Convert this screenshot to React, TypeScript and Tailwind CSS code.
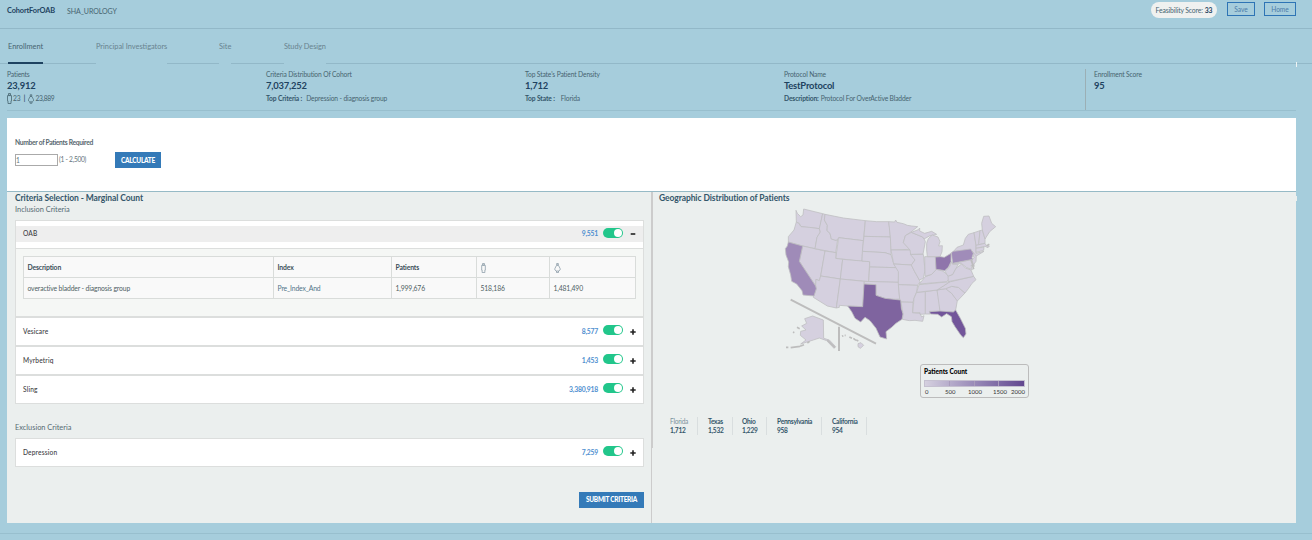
import React from "react";

const states: [string, string][] = [
  ["WA", "78,31 79,66 88,70 93,80 120,83 149,86 158,41 101,27 99,45 92,50 82,40"],
  ["OR", "79,66 72,90 55,110 55,126 98,138 135,146 141,112 151,96 148,86 118,82 93,80 86,70"],
  ["NV", "98,138 165,153 152,228 148,242 138,238 137,258 88,184"],
  ["ID", "158,41 165,43 163,60 172,76 171,92 180,100 184,117 198,121 203,118 197,158 135,146 141,112 151,96 148,86"],
  ["MT", "165,43 220,54 286,62 280,122 206,113 203,118 198,121 184,117 180,100 171,92 172,76 163,60"],
  ["WY", "206,113 280,122 276,184 197,175"],
  ["UT", "165,153 198,158 197,175 218,178 211,237 152,228"],
  ["CO", "218,178 299,185 296,245 211,237"],
  ["AZ", "152,228 211,237 199,324 172,318 130,292 139,266 137,258 138,238 148,242"],
  ["NM", "211,237 283,244 278,320 233,318 208,316 208,322 199,324"],
  ["ND", "286,62 320,65 356,65 360,92 361,111 282,109"],
  ["SD", "282,109 361,111 363,150 363,164 345,158 277,154"],
  ["NE", "277,154 345,158 363,164 371,190 380,203 299,201 299,185 276,183"],
  ["KS", "299,201 380,203 386,214 385,247 296,245"],
  ["OK", "283,244 385,247 389,297 372,298 345,295 318,286 318,254 282,252"],
  ["MN", "356,65 374,66 377,60 381,67 400,71 412,76 425,78 443,80 420,98 406,107 400,128 421,148 363,150 361,111"],
  ["IA", "363,150 421,150 428,165 435,180 424,195 371,192"],
  ["MO", "371,192 424,195 434,215 446,235 450,245 443,256 385,254 385,215"],
  ["AR", "385,254 443,256 440,275 432,295 429,307 393,306 389,297"],
  ["LA", "393,306 429,307 428,338 450,340 455,351 462,347 458,364 435,361 418,362 397,358 399,342"],
  ["MS", "440,277 466,275 466,342 450,343 450,338 428,338 432,295"],
  ["AL", "466,275 501,270 511,310 510,334 478,334 480,342 466,342"],
  ["GA", "501,270 527,266 545,280 562,302 557,330 550,336 510,334"],
  ["SC", "527,266 545,259 565,262 585,279 562,303 545,280"],
  ["NC", "538,246 611,229 618,239 606,250 596,265 585,279 565,262 545,259 527,266 501,270 520,258"],
  ["TN", "447,254 540,245 520,258 501,270 440,277"],
  ["KY", "448,252 466,230 485,223 499,208 518,213 532,224 544,230 530,245"],
  ["IL", "421,163 460,163 465,210 460,235 448,240 434,215 424,195 435,180"],
  ["IN", "464,170 496,170 499,208 485,223 465,229"],
  ["WI", "406,107 424,97 460,112 466,125 459,162 422,163 420,150 400,128"],
  ["UP", "424,97 445,89 449,84 449,93 464,100 485,94 500,103 480,107 462,117 458,111"],
  ["MI", "475,116 487,105 504,111 510,125 506,138 517,137 516,155 510,170 472,170 470,150 470,130"],
  ["WV", "544,185 548,193 565,193 558,205 548,224 534,229 525,214 538,202"],
  ["VA", "534,229 548,224 558,205 575,192 586,204 603,210 611,229 535,245"],
  ["MD", "548,191 608,178 613,199 603,196 607,209 590,203 575,191"],
  ["NJ", "605,153 619,164 618,184 610,195 606,180 612,173"],
  ["NY", "550,155 561,142 580,135 586,115 595,103 612,98 618,135 618,160 642,154 619,168 603,150"],
  ["VT", "612,98 630,92 626,135 618,136"],
  ["NH", "630,92 637,90 645,116 645,130 626,134"],
  ["ME", "637,90 635,70 641,49 657,48 665,70 677,80 659,95 645,117"],
  ["MA", "618,136 645,130 649,137 658,138 654,143 645,139 618,145"],
  ["CT", "618,145 642,141 641,151 618,157"],
  ["AK", "104,356 128,348 160,360 161,415 178,420 197,440 192,445 170,422 148,414 130,420 92,432 108,420 91,406 92,394 108,390 95,378 110,370"],
];

const shaded: [string, string, string][] = [
  ["CA", "55,126 98,138 88,184 137,258 139,266 132,288 99,285 96,272 80,252 65,244 62,225 55,200 56,186 48,165 46,146 52,138", "#9f8bb8"],
  ["TX", "282,252 318,254 318,286 345,295 372,298 392,300 394,325 399,342 396,358 378,370 365,382 348,395 350,417 330,411 318,385 300,362 285,352 272,366 255,355 245,335 233,318 278,320", "#7f649f"],
  ["OH", "496,171 511,170 523,172 543,160 543,185 535,202 524,212 514,210 498,208", "#8f75ab"],
  ["PA", "544,158 550,154 602,147 610,160 606,173 608,178 548,190", "#a08cb9"],
  ["FL", "479,335 510,333 550,336 557,330 571,355 586,385 588,402 580,413 572,405 555,380 546,365 544,350 530,341 515,351 503,343 481,342", "#72559a"],
];

function UsMap() {
  return (
    <svg className="ml-[111px] block h-[160px] w-[250px]" viewBox="0 0 750 480">
      <g fill="#d5d0df" stroke="#bfbfc1" strokeWidth="2.4" strokeLinejoin="round">
        {states.map(([id, points]) => <polygon key={id} points={points} />)}
        {shaded.map(([id, points, fill]) => <polygon key={id} points={points} fill={fill} />)}
        <path d="M264 431l9-3 8 8-10 9-7-5z" />
      </g>
      <g fill="none" stroke="#bdbdbd" strokeWidth="6">
        <path d="M62 299L318 431M207 380V453" />
        <path strokeWidth="5" d="M48 442h7M62 443l28-4M90 439l12-5M112 429l7-5M81 382l8 4M69 396l4 2M216 409l4-2M224 406h3M238 411l8 4M250 415l8 6M259 420l6 3M172 420l23 23M603 180l7 18M607 193l4 15M650 137l8-4" />
      </g>
    </svg>
  );
}

function Male({ className }: { className: string }) {
  return (
    <svg className={className} viewBox="0 0 5 11" fill="none" stroke="currentColor" strokeWidth=".8">
      <path d="M1.5.5h2v1.7h-2zM.5 2.6h4v5.2h-.5v2.7H1V7.8H.5z" />
    </svg>
  );
}

function Female({ className }: { className: string }) {
  return (
    <svg className={className} viewBox="0 0 7 11" fill="none" stroke="currentColor" strokeWidth=".8">
      <path d="M2.6.5h1.8v1.6H2.6zM2.4 2.6h2.2L6.4 6.2v1.4L5 8.8H2L.6 7.6V6.2zM2.4 8.8v1.7h2.2V8.8" />
    </svg>
  );
}

function CriteriaRow({ name, count, open = false }: { name: string; count: string; open?: boolean }) {
  return (
    <div className={"flex items-center pl-[7px] pr-[7px] " + (open ? "h-4 bg-[#eeeeee]" : "h-[27px]")}>
      <span className="text-[6.6px] font-medium tracking-[0.15px] text-[#3d3d44]">{name}</span>
      <span className="mb-px ml-auto text-[6.8px] font-bold tracking-[-0.03em] text-[#4f8fd0]">{count}</span>
      <span className={"ml-[5px] flex h-[10px] w-5 justify-end rounded-full bg-[#22c68b] p-px " + (open ? "mb-[2px]" : "mb-[3px]")}>
        <span className="size-2 rounded-full bg-white" />
      </span>
      <span className="ml-[7px] flex h-[7px] w-[6px] items-center justify-center">
        <svg className="size-[6px]" viewBox="0 0 6 6" stroke="#222" strokeWidth="1.6">
          <path d={open ? "M.7 3h4.6" : "M.3 3h5.4M3 .3v5.4"} />
        </svg>
      </span>
    </div>
  );
}

const stats = [
  { label: "Criteria Distribution Of Cohort", value: "7,037,252", key: "Top Criteria :", text: "Depression - diagnosis group", gap: "ml-1" },
  { label: "Top State's Patient Density", value: "1,712", key: "Top State :", text: "Florida", gap: "ml-[6px]" },
  { label: "Protocol Name", value: "TestProtocol", key: "Description:", text: "Protocol For OverActive Bladder", gap: "ml-0.5" },
];

const tops = [
  ["Florida", "1,712", "w-[28px] pl-0"],
  ["Texas", "1,532", "w-[35px] pl-[10px]"],
  ["Ohio", "1,229", "w-[34px] pl-[9px]"],
  ["Pennsylvania", "958", "w-[55px] pl-[10px]"],
  ["California", "954", "w-[45px] pl-[10px]"],
];

export default function App() {
  return (
    <div className="h-[540px] w-[1312px] overflow-hidden bg-[#a6cddc] font-['Lato','Liberation_Sans',sans-serif] whitespace-nowrap text-[#466470]">
      <header className="flex h-[29px] items-start border-b border-[#92b8c8] pl-[7px] pr-4">
        <span className="mt-[6px] w-[60px] text-[7.4px] leading-[10px] font-bold tracking-[-0.02em] text-[#1e4260]">CohortForOAB</span>
        <span className="mt-[6px] text-[7px] leading-[10px] tracking-[-0.01em]">SHA_UROLOGY</span>
        <span className="mt-[2px] ml-auto flex h-4 w-[66px] items-center justify-center gap-[2px] rounded-full bg-[#eff1f0] pt-px text-[6.8px] tracking-[-0.02em]">
          <span>Feasibility Score:</span><b className="text-[#1e4260]">33</b>
        </span>
        <button className="mt-[2px] ml-[10px] h-[14px] w-7 border border-[#2e74b5] pt-px text-[6.6px] leading-[11px] text-[#4a7ba9]">Save</button>
        <button className="mt-[2px] ml-[9px] h-[14px] w-8 border border-[#2e74b5] pt-px text-[6.6px] leading-[11px] text-[#4a7ba9]">Home</button>
      </header>

      <nav className="flex h-[35px] text-[7.4px] leading-[35px] text-[#68838f]">
        <span className="w-2 border-b border-[#92b8c8]" />
        <span className="w-[35px] border-b-2 border-[#1e4260] text-[#466470]">Enrollment</span>
        <span className="w-[53px] border-b border-[#92b8c8]" />
        <span className="w-[71px]">Principal Investigators</span>
        <span className="w-[52px] border-b border-[#92b8c8]" />
        <span className="w-3">Site</span>
        <span className="w-[53px] border-b border-[#92b8c8]" />
        <span className="w-[42px] tracking-[-0.01em]">Study Design</span>
        <span className="flex-1 border-b border-[#92b8c8]" />
        <span className="relative w-4 border-b border-[#92b8c8]">
          <i className="absolute top-[33px] left-0 h-[5px] w-px bg-[#eef3f3]" />
        </span>
      </nav>

      <section className="mr-4 ml-[7px] flex h-[47px] border-b border-[#98bfce] pt-[5px] text-[6.7px] tracking-[-0.02em]">
        <div className="w-[259px]">
          <div className="leading-[10px]">Patients</div>
          <div className="text-[9.4px] leading-[14px] font-bold text-[#1e4260]">23,912</div>
          <div className="flex h-[11px] items-center">
            <Male className="mr-px h-[11px] w-[5px]" />23
            <span className="mx-[3px] text-[8px] leading-[9px] text-[#1e4260]">|</span>
            <Female className="mr-[1px] h-[10px] w-[6px]" /><span className="tracking-[-0.05em]">23,889</span>
          </div>
        </div>
        {stats.map((s, i) => (
          <div key={s.label} className={i === 2 ? "w-[301px]" : "w-[259px]"}>
            <div className="leading-[10px]">{s.label}</div>
            <div className="text-[9.4px] leading-[14px] font-bold tracking-[-0.02em] text-[#1e4260]">{s.value}</div>
            <div className={i === 0 ? "leading-[10px]" : "leading-[11px]"}>
              <b className="text-[#34566a]">{s.key}</b><span className={s.gap}>{s.text}</span>
            </div>
          </div>
        ))}
        <div className="flex-1 border-l border-[#9bafb5] pl-2">
          <div className="leading-[10px]">Enrollment Score</div>
          <div className="text-[9.4px] leading-[14px] font-bold text-[#1e4260]">95</div>
        </div>
      </section>

      <main className="mt-[7px] mr-4 ml-[7px] h-[405px]">
        <section className="h-[74px] border-b border-[#96bac6] bg-white pt-[19px] pl-2">
          <div className="text-[6.7px] leading-[10px] font-bold tracking-[-0.045em] text-[#56666e]">Number of Patients Required</div>
          <div className="mt-[5px] flex h-4 items-center text-[6.6px] tracking-[-0.04em] text-[#62727b]">
            <div className="h-3 w-[43px] border border-[#aaaaaa] leading-[10px]">1</div>
            <span className="ml-px w-14">(1 - 2,500)</span>
            <button className="h-4 w-[46px] bg-[#347ab8] pt-px text-[6.5px] font-black tracking-[-0.04em] text-white">CALCULATE</button>
          </div>
        </section>

        <div className="flex h-[331px] bg-[#ebefee]">
          <section className="w-[637px] pl-2">
            <h2 className="text-[8.5px] leading-[13px] font-bold tracking-[-0.01em] text-[#34566a]">Criteria Selection - Marginal Count</h2>
            <div className="text-[7.4px] leading-[10px] text-[#566b74]">Inclusion Criteria</div>

            <div className="mt-[5px] flex h-[97px] flex-col border border-[#dcdedd] bg-white pt-[5px]">
              <CriteriaRow name="OAB" count="9,551" open />
              <div className="mt-[6px] flex-1 border-t border-[#dcdedd] bg-[#f5f7f5] px-[7px] pt-[7px]">
                <table className="h-[43px] w-[613px] table-fixed border-collapse bg-[#f9f9f9] text-left text-[6.8px] tracking-[-0.02em] text-[#4f5f64] [&_td]:border [&_td]:border-[#d9dcda] [&_td]:px-[3.5px] [&_td]:pt-px [&_th]:border [&_th]:border-[#d9dcda] [&_th]:px-[3.5px] [&_th]:pt-px">
                  <colgroup>
                    <col className="w-[250px]" /><col className="w-[118px]" /><col className="w-[85px]" /><col className="w-[73px]" /><col />
                  </colgroup>
                  <tbody>
                    <tr className="h-[21px] text-[#3b4f5a]">
                      <th>Description</th><th>Index</th><th>Patients</th>
                      <th className="text-[#8496a3]"><Male className="h-[10px] w-[5px]" /></th>
                      <th className="text-[#8496a3]"><Female className="h-[10px] w-[7px]" /></th>
                    </tr>
                    <tr className="h-[21px]">
                      <td>overactive bladder - diagnosis group</td><td className="text-[#527488]">Pre_Index_And</td><td>1,999,676</td><td>518,186</td><td>1,481,490</td>
                    </tr>
                  </tbody>
                </table>
              </div>
            </div>
            {[["Vesicare", "8,577"], ["Myrbetriq", "1,453"], ["Sling", "3,380,918"]].map(([n, c]) => (
              <div key={n} className="border border-[#dcdedd] bg-white"><CriteriaRow name={n} count={c} /></div>
            ))}
            <div className="mt-[19px] text-[7.4px] leading-[10px] text-[#566b74]">Exclusion Criteria</div>
            <div className="mt-[5px] border border-[#dcdedd] bg-white"><CriteriaRow name="Depression" count="7,259" /></div>
            <div className="mt-[25px] flex justify-end">
              <button className="h-4 w-[65px] bg-[#347ab8] text-[6.5px] font-black tracking-[-0.04em] text-white">SUBMIT CRITERIA</button>
            </div>
          </section>

          <div className="ml-[7px] flex w-0.5 flex-col">
            <div className="h-[256px] bg-[#cccccc]" />
            <div className="w-px flex-1 bg-[#cccccc]" />
          </div>

          <section className="relative flex-1 pl-[6px]">
            <i className="absolute top-1 -right-px h-[5px] w-px bg-[#ebefee]" />
            <h2 className="h-2 text-[8.5px] leading-[13px] font-bold tracking-[-0.01em] text-[#34566a]">Geographic Distribution of Patients</h2>
            <UsMap />
            <div className="mt-1 ml-[261px] h-[34px] w-[109px] rounded-[3px] border border-[#bcbcbc] px-[3px] pt-[3px]">
              <div className="text-[6.5px] leading-[8px] font-black text-black">Patients Count</div>
              <div className="mt-1 grid h-[7px] w-[101px] grid-cols-4 border border-[#c5c0d0] bg-linear-to-r from-[#d5d0df] to-[#62478f] [&>i]:border-r [&>i]:border-[#a99cbc]"><i /><i /><i /></div>
              <div className="flex pt-px pl-px text-[6px] leading-[8px] text-[#333]">
                <span className="w-5">0</span><span className="w-[23px]">500</span><span className="w-[25px]">1000</span><span className="w-[18px]">1500</span><span>2000</span>
              </div>
            </div>
            <div className="mt-[19px] ml-[11px] flex text-[6.6px] leading-[8.5px] tracking-[-0.04em] text-[#34566a]">
              {tops.map(([n, v, cls], i) => (
                <div key={n} className={"h-[18px] border-r border-[#d9dedf] " + cls}>
                  <div className={i === 0 ? "text-[#7d939d]" : "font-bold"}>{n}</div>
                  <div className="font-bold">{v}</div>
                </div>
              ))}
            </div>
          </section>
        </div>
      </main>
      <footer className="mt-[10px] h-[7px] border-t border-[#98bfce]" />
    </div>
  );
}
